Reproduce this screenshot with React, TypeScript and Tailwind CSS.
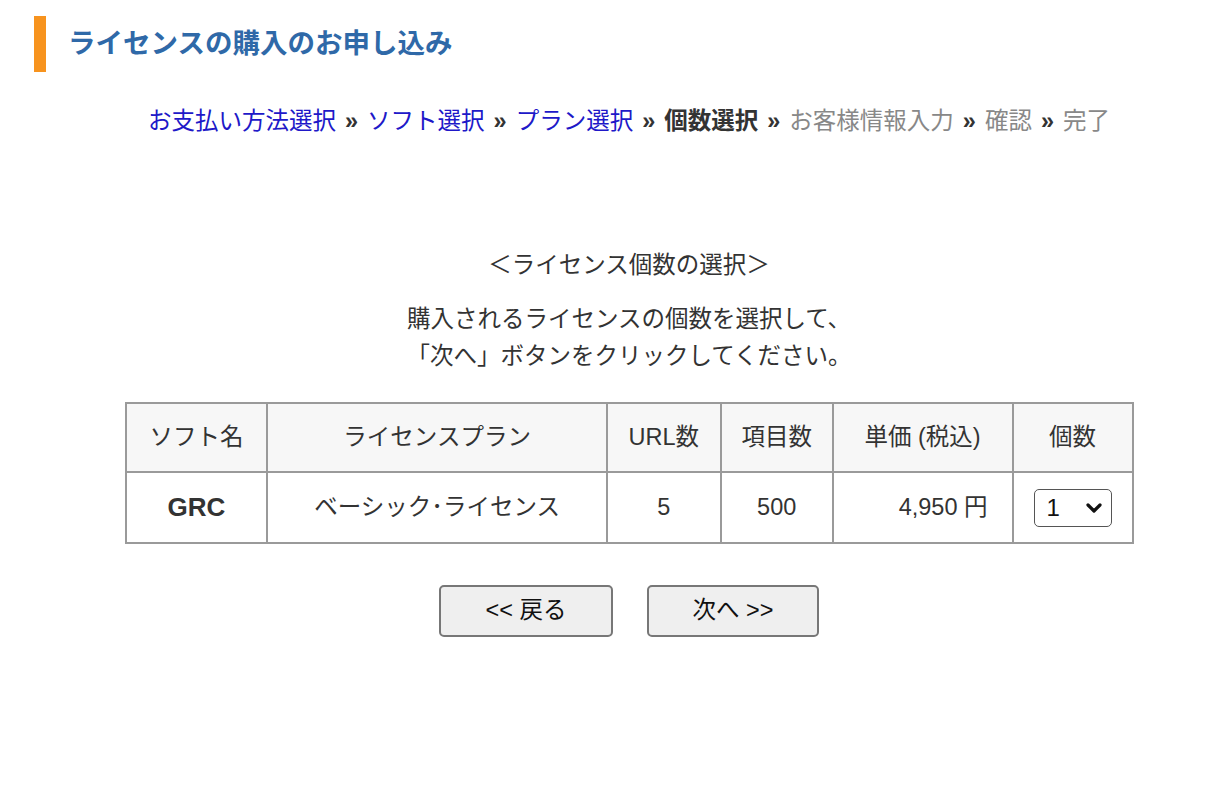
const font = { fontFamily: '"Liberation Sans", "Noto Sans CJK JP", sans-serif' };

type Step = { label: string; state: "done" | "current" | "todo" };

const steps: Step[] = [
  { label: "お支払い方法選択", state: "done" },
  { label: "ソフト選択", state: "done" },
  { label: "プラン選択", state: "done" },
  { label: "個数選択", state: "current" },
  { label: "お客様情報入力", state: "todo" },
  { label: "確認", state: "todo" },
  { label: "完了", state: "todo" },
];

const Breadcrumb = () => (
  <div className="flex justify-center items-center text-[23.5px] leading-[36px]">
    {steps.map((s, i) => (
      <span key={s.label} className="flex items-center">
        {i > 0 && <span className="mx-[9px] font-bold text-[#333]">»</span>}
        <span
          className={
            s.state === "done"
              ? "text-[#2018c8]"
              : s.state === "current"
              ? "font-bold text-[#333]"
              : "text-[#888]"
          }
        >
          {s.label}
        </span>
      </span>
    ))}
  </div>
);

const th = "border-2 border-[#9a9a9a] bg-[#f7f7f7] font-normal h-[69px] text-center";
const td = "border-2 border-[#9a9a9a] h-[71px] text-center";

export default function App() {
  return (
    <div className="bg-white w-[1210px] h-[798px] text-[#333]" style={font}>
      <div className="flex items-center pt-[16px]">
        <div className="ml-[34px] w-[12px] h-[56px] bg-[#f7931e]" />
        <h1 className="ml-[22px] text-[27.5px] leading-[56px] font-bold text-[#2f69a8]">
          ライセンスの購入のお申し込み
        </h1>
      </div>

      <div className="pl-[48px]">
        <div className="mt-[31px]">
          <Breadcrumb />
        </div>

        <p className="mt-[108px] text-center text-[23.5px] leading-[36px]">＜ライセンス個数の選択＞</p>
        <p className="mt-[18px] text-center text-[23.5px] leading-[37px]">
          購入されるライセンスの個数を選択して、
          <br />
          「次へ」ボタンをクリックしてください。
        </p>

        <table className="mt-[27px] mx-auto w-[1009px] border-collapse text-[23.5px]">
          <thead>
            <tr>
              <th className={th + " w-[142px]"}>ソフト名</th>
              <th className={th + " w-[340px]"}>ライセンスプラン</th>
              <th className={th + " w-[114px]"}>URL数</th>
              <th className={th + " w-[112px]"}>項目数</th>
              <th className={th + " w-[180px]"}>単価 (税込)</th>
              <th className={th + " w-[120px]"}>個数</th>
            </tr>
          </thead>
          <tbody>
            <tr>
              <td className={td + " font-bold text-[26px]"}>GRC</td>
              <td className={td}>ベーシック･ライセンス</td>
              <td className={td}>5</td>
              <td className={td}>500</td>
              <td className={td + " !text-right pr-[24px]"}>4,950 円</td>
              <td className={td}>
                <div className="mx-auto w-[78px] h-[38px] border border-[#555] rounded-[5px] flex items-center justify-between pl-[12px] pr-[8px] bg-white">
                  <span className="text-[24px] leading-none text-[#111]">1</span>
                  <svg width="18" height="12" viewBox="0 0 18 12">
                    <path d="M3 3 L9 9 L15 3" fill="none" stroke="#111" strokeWidth="3.2" strokeLinecap="round" strokeLinejoin="round" />
                  </svg>
                </div>
              </td>
            </tr>
          </tbody>
        </table>

        <div className="mt-[41px] flex justify-center gap-[34px]">
          <button className="w-[174px] h-[52px] bg-[#efefef] border-2 border-[#777] rounded-[5px] text-[23.5px] text-[#111]">
            &lt;&lt; 戻る
          </button>
          <button className="w-[172px] h-[52px] bg-[#efefef] border-2 border-[#777] rounded-[5px] text-[23.5px] text-[#111]">
            次へ &gt;&gt;
          </button>
        </div>
      </div>
    </div>
  );
}
